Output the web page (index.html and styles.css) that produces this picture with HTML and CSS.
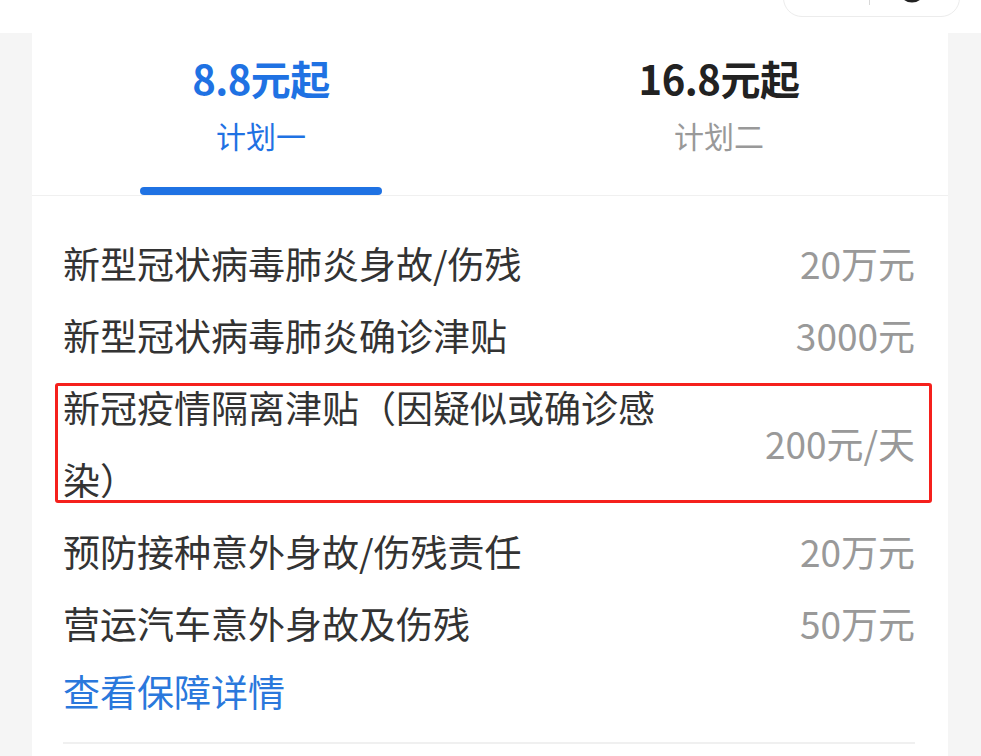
FILE: index.html
```html
<!DOCTYPE html>
<html lang="zh-CN">
<head>
<meta charset="utf-8">
<title>保障计划</title>
<link rel="stylesheet" href="styles.css">
</head>
<body>
<header class="topbar">
  <div class="capsule">
    <span class="capsule-more"></span>
    <span class="capsule-sep"></span>
    <span class="capsule-close">
      <svg width="28" height="28" viewBox="0 0 28 28"><circle cx="14" cy="14" r="11.5" fill="none" stroke="#222" stroke-width="4"/><circle cx="14" cy="14" r="4" fill="#222"/></svg>
    </span>
  </div>
</header>
<main class="card">
  <div class="tabs">
    <div class="tab tab-active">
      <div class="tab-price">8.8元起</div>
      <div class="tab-name">计划一</div>
      <div class="tab-bar"></div>
    </div>
    <div class="tab">
      <div class="tab-price">16.8元起</div>
      <div class="tab-name">计划二</div>
      <div class="tab-bar"></div>
    </div>
  </div>
  <ul class="items">
    <li class="item"><span class="item-name">新型冠状病毒肺炎身故/伤残</span><span class="item-value">20万元</span></li>
    <li class="item"><span class="item-name">新型冠状病毒肺炎确诊津贴</span><span class="item-value">3000元</span></li>
    <li class="item item-marked"><span class="item-name">新冠疫情隔离津贴（因疑似或确诊感染）</span><span class="item-value">200元/天</span></li>
    <li class="item"><span class="item-name">预防接种意外身故/伤残责任</span><span class="item-value">20万元</span></li>
    <li class="item"><span class="item-name">营运汽车意外身故及伤残</span><span class="item-value">50万元</span></li>
  </ul>
  <a class="more-link" href="#">查看保障详情</a>
  <div class="bottom-rule"></div>
</main>
</body>
</html>
```

FILE: styles.css
```css
* { box-sizing: border-box; }

html, body {
  margin: 0;
  padding: 0;
}

body {
  background: #f5f5f5;
  font-family: "Noto Sans CJK SC", "Noto Sans", sans-serif;
  color: #333;
  overflow: hidden;
}

.topbar {
  height: 33px;
  background: #fff;
  display: flex;
  justify-content: flex-end;
  padding-right: 21px;
}

.capsule {
  margin-top: -21px;
  width: 177px;
  height: 38px;
  border: 1px solid #ececec;
  border-radius: 19px;
  background: #fff;
  display: flex;
  align-items: center;
}

.capsule-more {
  width: 85px;
}

.capsule-sep {
  width: 1px;
  height: 14px;
  background: #d8d8d8;
}

.capsule-close {
  margin-left: 28px;
  margin-top: -18px;
  display: flex;
}

.card {
  display: block;
  margin: 0 33px 0 32px;
  background: #fff;
  padding-bottom: 20px;
}

.tabs {
  display: grid;
  grid-template-columns: 1fr 1fr;
  border-bottom: 1px solid #f0f0f0;
}

.tab {
  display: flex;
  flex-direction: column;
  align-items: center;
  padding-top: 21px;
}

.tab-price {
  font-size: 40px;
  line-height: 48px;
  font-weight: 700;
  color: #222;
  letter-spacing: -0.5px;
}

.tab-name {
  margin-top: 13px;
  font-size: 30px;
  line-height: 40px;
  color: #999;
}

.tab-bar {
  margin-top: 32px;
  width: 242px;
  height: 8px;
  border-radius: 4px;
  background: transparent;
}

.tab-active .tab-price,
.tab-active .tab-name {
  color: #1f72e3;
}

.tab-active .tab-bar {
  background: #1f72e3;
}

.items {
  list-style: none;
  margin: 0;
  padding: 31px 33px 0 31px;
}

.item {
  display: flex;
  align-items: center;
  font-size: 37px;
  line-height: 72px;
  position: relative;
}

.item-name {
  flex: 0 1 600px;
  color: #333;
}

.item-value {
  margin-left: auto;
  color: #999;
  white-space: nowrap;
}

.item-marked::after {
  content: "";
  position: absolute;
  top: 12px;
  bottom: 12px;
  left: -8px;
  right: -17px;
  border: 3px solid #f5201c;
  border-radius: 3px;
  pointer-events: none;
}

.more-link {
  display: block;
  margin-left: 31px;
  font-size: 37px;
  line-height: 64px;
  color: #2a78dc;
  text-decoration: none;
}

.bottom-rule {
  margin: 19px 33px 0 31px;
  height: 2px;
  background: #f0f0f0;
}
```
